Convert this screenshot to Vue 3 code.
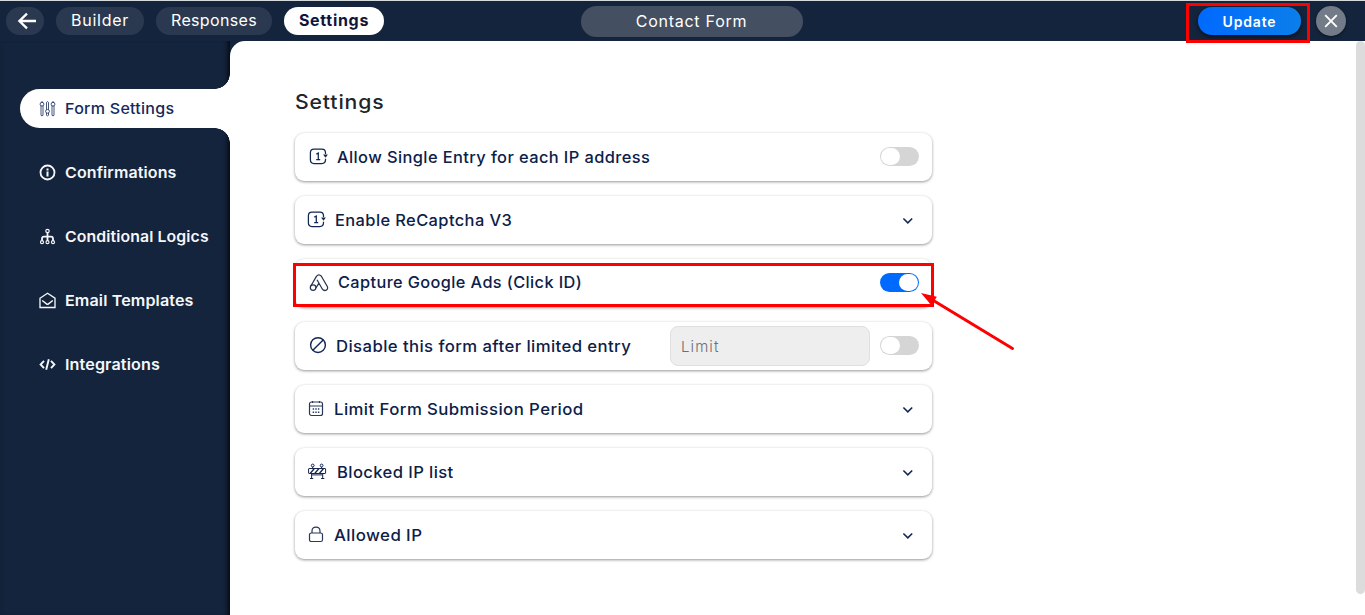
<script setup>
const nav = [
  { label: 'Form Settings', icon: 'sliders', stretch: 1.069, active: true },
  { label: 'Confirmations', icon: 'info', stretch: 1.067 },
  { label: 'Conditional Logics', icon: 'tree', stretch: 1.055 },
  { label: 'Email Templates', icon: 'mail', stretch: 1.075 },
  { label: 'Integrations', icon: 'code', stretch: 1.077 },
]
const rows = [
  { label: 'Allow Single Entry for each IP address', icon: 'one', lead: 14, gap: 28, stretch: 1.025, toggle: 'off' },
  { label: 'Enable ReCaptcha V3', icon: 'one', lead: 12, gap: 28, stretch: 1.026 },
  { label: 'Capture Google Ads (Click ID)', icon: 'ads', lead: 14, gap: 29, stretch: 1.018, toggle: 'on', raised: true },
  { label: 'Disable this form after limited entry', icon: 'ban', lead: 14, gap: 27, stretch: 1.044, toggle: 'off', limit: true },
  { label: 'Limit Form Submission Period', icon: 'cal', lead: 13, gap: 26, stretch: 1.048 },
  { label: 'Blocked IP list', icon: 'barrier', lead: 13, gap: 29, stretch: 1.036 },
  { label: 'Allowed IP', icon: 'lock', lead: 13, gap: 25.5, stretch: 1.052 },
]
</script>

<template>
  <div class="page">
    <header class="top">
      <button class="back">
        <svg width="20" height="18" viewBox="0 0 20 18"><path d="M19 9H2.6M10 1.6L2.4 9l7.6 7.4" fill="none" stroke="#fff" stroke-width="2.3" /></svg>
      </button>
      <a class="pill builder">Builder</a>
      <a class="pill responses">Responses</a>
      <a class="pill current">Settings</a>
      <div class="title">Contact Form</div>
      <button class="update">Update</button>
      <button class="close">
        <svg width="14" height="14" viewBox="0 0 14 14"><path d="M1.2 1.2l11.6 11.6M12.8 1.2L1.2 12.8" stroke="#fff" stroke-width="1.9" /></svg>
      </button>
    </header>

    <div class="body">
      <aside class="side">
        <a v-for="n in nav" :key="n.label" class="nav" :class="{ active: n.active }">
          <svg class="nicon" width="17" height="18" viewBox="0 0 17 18" fill="none" stroke="currentColor">
            <g v-if="n.icon === 'sliders'" stroke-width=".8">
              <circle cx="3" cy="4.2" r="1.9" /><path d="M2 5.7v9.6q1 1.2 2 0V5.7M2.1 2.3q.9-1.4 1.8 0" />
              <circle cx="8.5" cy="11.3" r="1.9" /><path d="M7.5 9.7V2.4q1-1.5 2 0v7.3M7.5 12.9v2.4q1 1.2 2 0v-2.4" />
              <circle cx="14" cy="4.2" r="1.9" /><path d="M13 5.7v9.6q1 1.2 2 0V5.7M13.1 2.3q.9-1.4 1.8 0" />
            </g>
            <g v-else-if="n.icon === 'info'">
              <circle cx="8.5" cy="8.5" r="7" stroke-width="1.8" /><path d="M8.5 7.6v4.8M8.5 4.5v1.9" stroke-width="2" />
            </g>
            <g v-else-if="n.icon === 'tree'" stroke-width="1.2">
              <circle cx="8.5" cy="3" r="1.7" /><circle cx="3" cy="14.2" r="1.5" /><circle cx="8.5" cy="14.2" r="1.5" /><circle cx="14" cy="14.2" r="1.5" />
              <path d="M8.5 4.7v8M3 12.7v-2q0-2 2-2h7q2 0 2 2v2" stroke-width="1.8" />
            </g>
            <path v-else-if="n.icon === 'mail'" d="M1 6.2L8.5 1.3 16 6.2v9.3H1zM3.2 8.5l4.3 3.4q1 .8 2 0l4.3-3.4" stroke-width="1.35" />
            <path v-else d="M5 4.9L1.6 8.5 5 12.1M12 4.9l3.4 3.6-3.4 3.6M9.8 3.3L7.2 13.7" stroke-width="1.9" />
          </svg>
          <span class="ntext" :style="{ transform: `scaleX(${n.stretch})` }">{{ n.label }}</span>
        </a>
      </aside>

      <main class="main">
        <h1>Settings</h1>
        <section v-for="r in rows" :key="r.label" class="card" :style="{ paddingLeft: r.lead + 'px' }">
          <span class="ricon" :style="{ width: r.gap + 'px' }">
            <svg v-if="r.icon === 'one'" width="20" height="18" viewBox="0 0 20 18" fill="none" stroke="#122653" stroke-width="1.25">
              <path d="M16.5 6V4.8q0-3.7-3.7-3.7H5Q1.4 1.1 1.4 4.8v7q0 3.7 3.6 3.7h7.8q3.7 0 3.7-3.7v-1" />
              <path d="M14.1 6.5h4.8l-2.4 3.2z" fill="#122653" stroke="none" /><path d="M7.3 6.1l2-1v6.3M7.2 11.5h4" />
            </svg>
            <svg v-else-if="r.icon === 'ads'" width="20" height="18" viewBox="0 0 20 18" fill="none" stroke="#27344f" stroke-width="1.25">
              <circle cx="4.1" cy="13.6" r="2.8" /><path d="M1.7 12.2L7.4 2.4Q9.2.2 11.2 1.3q.8.4 1.3 1.2l5.8 9.9q1 2.6-1 3.7-2.3 1.1-3.9-.9L8 5.7M6.9 13.8l3.3-5" />
            </svg>
            <svg v-else-if="r.icon === 'ban'" width="18" height="18" viewBox="0 0 18 18" fill="none" stroke="#122653" stroke-width="1.4">
              <circle cx="9" cy="8.1" r="7.4" /><path d="M3.8 13.3L14.2 2.9" />
            </svg>
            <svg v-else-if="r.icon === 'cal'" width="16" height="18" viewBox="0 0 16 18" fill="none" stroke="#27385c" stroke-width="1.2">
              <rect x="1.5" y="2" width="13" height="13.5" rx="2" /><path d="M1.5 6h13M4.5 1v2M11.5 1v2" />
              <path d="M4.7 9h1.4M7.3 9h1.4M9.9 9h1.4M4.7 12.3h1.4M7.3 12.3h1.4M9.9 12.3h1.4" stroke-width="1.5" />
            </svg>
            <svg v-else-if="r.icon === 'barrier'" width="19" height="18" viewBox="0 0 19 18" fill="none" stroke="#17264d" stroke-width="1">
              <rect x=".6" y="5.5" width="17" height="5" rx=".5" /><circle cx="4.7" cy="2.5" r="1.4" /><circle cx="13.6" cy="2.5" r="1.4" />
              <path d="M4.7 3.9v1.6M13.6 3.9v1.6M3.6 10.5v5M14.7 10.5v5M2 15.5h3.2M13.1 15.5h3.2M3.6 11.9h11.100" />
              <path d="M2.300 10.200l3.900-4.500M6.900 10.200l3.900-4.500M11.500 10.200l3.900-4.500" stroke-width="1.300" />
            </svg>
            <svg v-else width="16" height="18" viewBox="0 0 16 18" fill="none" stroke="#27385c" stroke-width="1.2">
              <rect x="1.5" y="7" width="13" height="8.5" rx="1.8" /><path d="M4 7V5.2q0-4 4-4t4 4V7" />
            </svg>
          </span>
          <span class="label" :class="{ raised: r.raised }"><b :style="{ transform: `scaleX(${r.stretch})` }">{{ r.label }}</b></span>
          <input v-if="r.limit" class="limit" placeholder="Limit" disabled />
          <span v-if="r.toggle" class="toggle" :class="r.toggle"><i></i></span>
          <svg v-else class="chev" width="12" height="8" viewBox="0 0 12 8"><path d="M1.4 1.5L5.8 5.8l4.4-4.3" fill="none" stroke="#122653" stroke-width="1.6" /></svg>
        </section>
      </main>
      <div class="scroll"></div>
    </div>

    <svg class="marks" width="1365" height="615" viewBox="0 0 1365 615" fill="none" stroke="#f00" stroke-width="3">
      <rect x="1187.5" y="4.5" width="121" height="37" />
      <rect x="294.5" y="264.5" width="638" height="41" />
      <path d="M933 300.3L1012.5 348.5" stroke-linecap="round" />
      <path d="M921 293l15.8 3.7-5.3 8.7z" fill="#f00" stroke="none" />
    </svg>
  </div>
</template>

<style>
body { margin: 0; overflow: hidden; }
</style>

<style scoped>
* { box-sizing: border-box; }
.page { position: relative; width: 1365px; height: 615px; background: #14243c; font-family: Inter, "Open Sans", sans-serif; overflow: hidden; display: flex; flex-direction: column; }
button { border: 0; padding: 0; font-family: inherit; }
.top { height: 41px; flex: none; border-top: 1px solid #d5dadd; display: flex; align-items: flex-start; padding: 6px 0 0 6px; color: #fff; }
.back { width: 38px; height: 28px; border-radius: 14px; background: #2b3950; display: flex; align-items: center; justify-content: center; padding-left: 4px; }
.pill { height: 28px; line-height: 27px; border-radius: 14px; background: #2b3950; font-size: 16px; text-align: center; margin-left: 12px; }
.builder { width: 88px; letter-spacing: .75px; }
.responses { width: 116px; letter-spacing: .35px; }
.current { width: 100px; background: #fff; color: #10153a; font-weight: 650; letter-spacing: .7px; }
.title { margin: -1px 0 0 197px; width: 222px; height: 31px; line-height: 30px; border-radius: 16px; background: #444f61; text-align: center; font-size: 16px; letter-spacing: .75px; padding-right: 1px; }
.update { margin-left: 395px; width: 103px; height: 28px; line-height: 27px; border-radius: 14px; background: linear-gradient(100deg, #0069ff, #0b7fea); color: #fff; font-weight: 600; font-size: 14px; letter-spacing: .85px; box-shadow: 0 2px 4px rgba(0,0,0,.55); }
.close { margin: -1px 0 0 15px; width: 30px; height: 30px; border-radius: 50%; background: #737b88; display: flex; align-items: center; justify-content: center; box-shadow: 0 1px 3px rgba(0,0,0,.5); }
.body { flex: 1; display: flex; min-height: 0; position: relative; }
.side { width: 230px; padding-top: 48px; display: flex; flex-direction: column; gap: 25px; box-shadow: inset -6px 0 5px -4px rgba(0,0,0,.8), inset 3px 0 5px -3px rgba(0,0,0,.12); }
.nav { margin-left: 20px; height: 39px; display: flex; align-items: center; padding-left: 19px; color: #f5f7fa; font-size: 15px; font-weight: 600; position: relative; white-space: nowrap; }
.ntext { transform-origin: left; letter-spacing: .1px; }
.active .ntext { letter-spacing: .24px; }
.nicon { margin-right: 9px; flex: none; }
.nav.active { background: #fff; border-radius: 20px 0 0 20px; color: #16295a; font-weight: 500; }
.nav.active::before, .nav.active::after { content: ""; position: absolute; right: 0; width: 15px; height: 15px; }
.nav.active::before { top: -15px; background: radial-gradient(circle at 0 0, transparent 14.5px, #fff 15px); }
.nav.active::after { bottom: -15px; background: radial-gradient(circle at 0 100%, transparent 14.5px, #fff 15px); }
.main { flex: 1; background: #fff; border-radius: 15px 0 0 0; padding: 46px 0 0 65px; }
h1 { margin: 0 0 16px; width: 300px; height: 30px; line-height: 30px; font-size: 20px; font-weight: 500; letter-spacing: .8px; color: #212529; transform: scaleX(1.06); transform-origin: left; }
.card { width: 637px; height: 48px; margin-bottom: 15px; border-radius: 9px; box-shadow: 0 1px 3px rgba(0,0,0,.42); display: flex; align-items: center; padding-right: 13px; }
.ricon { flex: none; height: 18px; }
.ricon svg { display: block; }
.label { flex: 1; white-space: nowrap; font-size: 16px; color: #0c2048; letter-spacing: .4px; }
.label b { display: inline-block; font-weight: 500; transform-origin: left; }
.raised { margin-top: -2px; }
.limit { width: 200px; height: 40px; margin-right: 10px; border: 1px solid #dfdfdf; border-radius: 8px; background: #eee; padding: 0 10px; font-family: Inter, sans-serif; font-size: 15px; font-weight: 300; letter-spacing: 1.1px; }
.limit::placeholder { color: #6b6f73; opacity: 1; }
.toggle { width: 39px; height: 19px; border-radius: 10px; background: #d5d5d5; padding: 1px; display: flex; margin-top: -1px; }
.toggle i { width: 19px; height: 17px; border-radius: 9px; background: #fff; }
.toggle.on { background: #006aff; justify-content: flex-end; }
.chev { margin: 2px 5px 0 0; }
.scroll { position: absolute; right: 0; top: 0; width: 9px; height: 553px; border-radius: 5px; background: #dcdcdc; }
.marks { position: absolute; left: 0; top: 0; pointer-events: none; }
</style>
